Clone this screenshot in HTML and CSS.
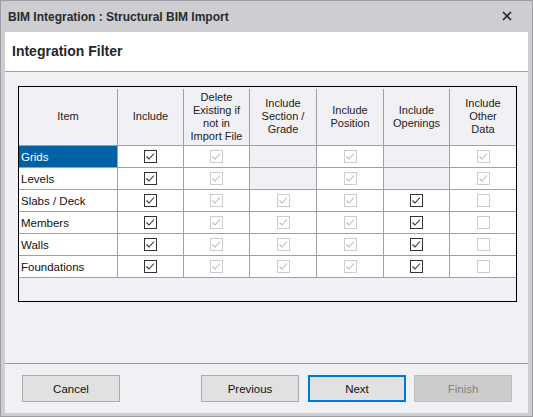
FILE: index.html
```html
<!doctype html>
<html>
<head>
  <link rel="stylesheet" href="styles.css">
</head>
<body>
  <div class="window">
    <div class="titlebar">
      <span class="title">BIM Integration : Structural BIM Import</span>
      <svg class="close" width="10" height="10" viewBox="0 0 10 10">
        <path d="M1 1 L9 9 M9 1 L1 9" stroke="#2b2b2b" stroke-width="1.7" fill="none"/>
      </svg>
    </div>
    <div class="panel">
      <div class="pageHeader">Integration Filter</div>
      <div class="pageBody">
        <div class="grid" id="grid">
          <div class="hcell">Item</div>
          <div class="hcell">Include</div>
          <div class="hcell">Delete<br>Existing if<br>not in<br>Import File</div>
          <div class="hcell">Include<br>Section /<br>Grade</div>
          <div class="hcell">Include<br>Position</div>
          <div class="hcell">Include<br>Openings</div>
          <div class="hcell last">Include<br>Other<br>Data</div>
        </div>
      </div>
      <div class="footer">
        <button class="btn">Cancel</button>
        <div class="spacer"></div>
        <button class="btn">Previous</button>
        <button class="btn focused">Next</button>
        <button class="btn disabled">Finish</button>
      </div>
    </div>
  </div>

  <script>
    // c = enabled checked, d = disabled checked, u = disabled unchecked, x = no box
    var rows = [
      ['Grids', 'c', 'd', 'x', 'd', 'x', 'd'],
      ['Levels', 'c', 'd', 'x', 'd', 'x', 'd'],
      ['Slabs / Deck', 'c', 'd', 'd', 'd', 'c', 'u'],
      ['Members', 'c', 'd', 'd', 'd', 'c', 'u'],
      ['Walls', 'c', 'd', 'd', 'd', 'c', 'u'],
      ['Foundations', 'c', 'd', 'd', 'd', 'c', 'u']
    ];

    function box(kind){
      var tick = "<polyline points='2.5,6.5 5,9 10,3.5' fill='none' stroke-width='1.1'/>";
      if(kind == 'u'){ tick = ""; }
      return "<svg class='chk " + kind + "' width='13' height='13' viewBox='0 0 13 13'>" +
        "<rect x='0.5' y='0.5' width='12' height='12' fill='#fff'/>" + tick + "</svg>";
    }

    var markup = "";
    for(var i = 0; i < rows.length; i++){
      var sel = (i == 0) ? " selected" : "";
      markup += "<div class='cell name" + sel + "'>" + rows[i][0] + "</div>";
      for(var j = 1; j < rows[i].length; j++){
        var last = (j == rows[i].length - 1) ? " last" : "";
        if(rows[i][j] == 'x'){
          markup += "<div class='cell empty" + last + "'></div>";
        }
        else{
          markup += "<div class='cell" + last + "'>" + box(rows[i][j]) + "</div>";
        }
      }
    }
    document.getElementById("grid").innerHTML += markup;
  </script>
</body>
</html>
```

FILE: styles.css
```css
body{
  margin: 0;
  font-family: "Liberation Sans", Arial, sans-serif;
  font-size: 11px;
  color: #1e1e1e;
}
.window{
  width: 533px;
  height: 417px;
  box-sizing: border-box;
  border: 1px solid #9d9da3;
  background-color: #cdcdd2;
  display: flex;
  flex-direction: column;
}
.titlebar{
  height: 31px;
  flex: none;
  display: flex;
  align-items: center;
  padding: 0 20px 0 7px;
}
.title{
  font-weight: bold;
  font-size: 12px;
  color: #2b2b2b;
  flex: 1;
}
.close{
  display: block;
  margin-top: -1px;
}
.panel{
  flex: 1;
  margin: 0 4px 3px 4px;
  background-color: #f1f1f5;
  display: flex;
  flex-direction: column;
}
.pageHeader{
  height: 39px;
  flex: none;
  background-color: #fff;
  border-bottom: 1px solid #a0a0a0;
  font-size: 14px;
  font-weight: bold;
  color: #262626;
  padding-left: 7px;
  line-height: 39px;
}
.pageBody{
  flex: 1;
  padding: 14px 11px 0 13px;
}
.grid{
  width: 499px;
  height: 216px;
  box-sizing: border-box;
  border: 1px solid #000;
  display: grid;
  grid-template-columns: 99px 66px 66px 67px 67px 66px 66px;
  grid-template-rows: 59px repeat(6, 22px);
  align-content: start;
  background-color: #f1f1f5;
}
.hcell{
  margin-top: 2px;
  border-right: 1px solid #a0a0a0;
  border-bottom: 1px solid #a0a0a0;
  display: flex;
  align-items: center;
  justify-content: center;
  text-align: center;
  line-height: 13px;
  color: #222;
  padding-bottom: 1px;
}
.hcell.last, .cell.last{
  border-right: none;
}
.cell{
  background-color: #fff;
  border-right: 1px solid #a0a0a0;
  border-bottom: 1px solid #a0a0a0;
  display: flex;
  align-items: center;
  justify-content: center;
}
.cell.name{
  justify-content: flex-start;
  padding-left: 2px;
  font-size: 11.5px;
  color: #111;
}
.cell.selected{
  background-color: #0062a4;
  color: #fff;
}
.cell.empty{
  background-color: #f1f1f5;
}
.chk{
  display: block;
}
.chk.c rect{
  stroke: #333;
}
.chk.c polyline{
  stroke: #333;
}
.chk.d rect, .chk.u rect{
  stroke: #cccccc;
}
.chk.d polyline{
  stroke: #bcbcbc;
}
.footer{
  flex: none;
  height: 50px;
  box-sizing: border-box;
  border-top: 1px solid #a0a0a0;
  display: flex;
  align-items: flex-start;
  padding: 11px 16px 0 17px;
}
.spacer{
  flex: 1;
}
.btn{
  width: 98px;
  height: 27px;
  margin: 0 0 0 8px;
  background-color: #e1e1e1;
  border: 1px solid #adadad;
  font-family: "Liberation Sans", Arial, sans-serif;
  font-size: 11.5px;
  color: #111;
  padding: 0;
}
.btn:first-child{
  margin-left: 0;
}
.btn.focused{
  border: 2px solid #0078d7;
  margin-left: 9px;
}
.btn.disabled{
  background-color: #cccccc;
  border-color: #bfbfbf;
  color: #838383;
}
```
